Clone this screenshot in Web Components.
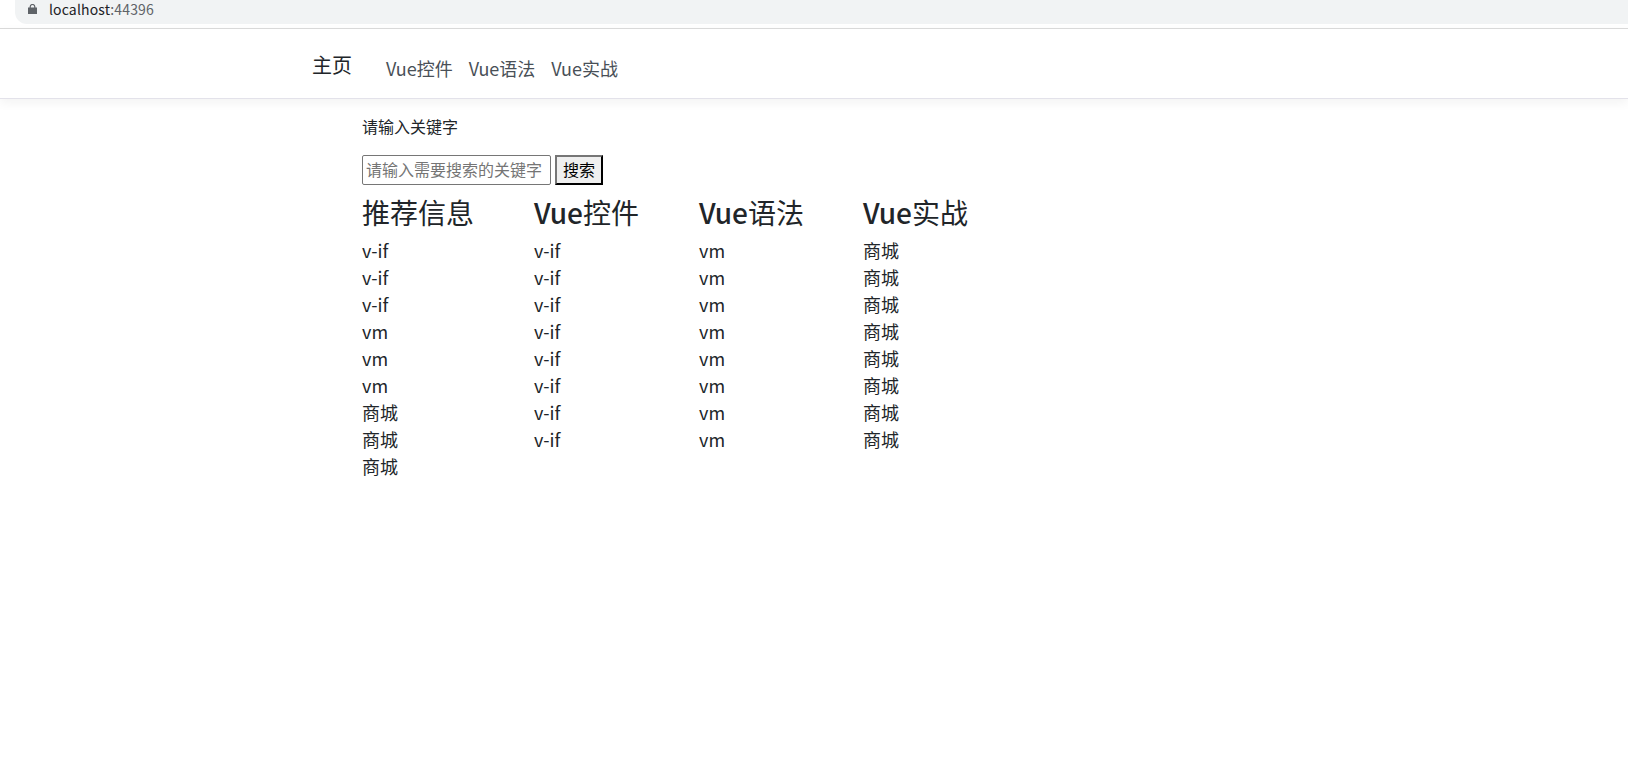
<!DOCTYPE html>
<html lang="zh-CN">
<head>
<meta charset="utf-8">
<title>localhost:44396</title>
<style>
html, body { margin: 0; background: #fff; }
body {
  font-family: "Noto Sans CJK SC", "Noto Sans", sans-serif;
  font-size: 18px;
  line-height: 27px;
  color: #212529;
}
</style>
</head>
<body>
<url-bar host="localhost" port=":44396"></url-bar>
<site-nav brand="主页">
  <a>Vue控件</a>
  <a>Vue语法</a>
  <a>Vue实战</a>
</site-nav>
<search-page>
  <link-column title="推荐信息" items="v-if,v-if,v-if,vm,vm,vm,商城,商城,商城"></link-column>
  <link-column latin="Vue" title="控件" items="v-if,v-if,v-if,v-if,v-if,v-if,v-if,v-if"></link-column>
  <link-column latin="Vue" title="语法" items="vm,vm,vm,vm,vm,vm,vm,vm"></link-column>
  <link-column latin="Vue" title="实战" items="商城,商城,商城,商城,商城,商城,商城,商城"></link-column>
</search-page>

<script>
class UrlBar extends HTMLElement {
  constructor() {
    super();
    this.attachShadow({ mode: "open" });
    this.shadowRoot.innerHTML = `<style>
:host { display: block; height: 28px; background: #fff; }
.bar {
  height: 24px;
  margin-left: 15px;
  padding-left: 13px;
  display: flex;
  align-items: center;
  gap: 12px;
  background: #f1f3f4;
  border-bottom-left-radius: 12px;
  font-size: 14px;
  letter-spacing: .14px;
  line-height: 18px;
  color: #202124;
}
.bar span span { color: #5f6368; }
.bar > span { position: relative; top: -3px; }
svg { position: relative; top: -3px; }
</style>
<div class="bar">
<svg width="9" height="10" viewBox="0 0 9 10"><path fill="#5f6368" d="M1.6 3.6V2.8a2.9 2.9 0 0 1 5.8 0v.8H9V10H0V3.6zM2.8 3.6h3.4v-.8a1.7 1.7 0 0 0-3.4 0z"/></svg>
<span>${this.getAttribute("host")}<span>${this.getAttribute("port")}</span></span>
</div>`;
  }
}
customElements.define("url-bar", UrlBar);

class SiteNav extends HTMLElement {
  constructor() {
    super();
    this.attachShadow({ mode: "open" });
    this.shadowRoot.innerHTML = `<style>
:host {
  display: flex;
  height: 69px;
  padding-left: 312px;
  border-top: 1px solid #d9d9d9;
  border-bottom: 1px solid #e3e2ea;
  box-shadow: 0 4px 10px rgba(0, 0, 0, .05);
  background: #fff;
  position: relative;
}
.brand { font-size: 20px; line-height: 30px; margin: 21px 34px 0 0; color: #212529; }
.links { display: flex; gap: 16px; margin-top: 26px; font-size: 18px; line-height: 27px; color: #495057; }
::slotted(a) { color: inherit; }
</style>
<div class="brand">${this.getAttribute("brand")}</div>
<div class="links"><slot></slot></div>`;
  }
}
customElements.define("site-nav", SiteNav);

class SearchPage extends HTMLElement {
  constructor() {
    super();
    this.attachShadow({ mode: "open" });
    this.shadowRoot.innerHTML = `<style>
:host { display: block; padding: 15px 0 0 362px; }
label { display: block; font-size: 16px; line-height: 24px; }
form { display: flex; gap: 4px; margin-top: 17px; height: 30px; }
input {
  width: 189px;
  height: 30px;
  box-sizing: border-box;
  padding: 0 3px 2px;
  border: 1px solid #767676;
  border-radius: 2px;
  font: 16px "Noto Sans CJK SC", sans-serif;
  outline: none;
}
input::placeholder { color: #757575; opacity: 1; }
button {
  width: 48px;
  height: 30px;
  padding: 0 0 2px;
  border: 2px outset #333;
  border-color: #767676 #111 #111 #767676;
  background: #efefef;
  color: #000;
  font: 16px "Noto Sans CJK SC", sans-serif;
}
.cols { display: grid; grid-template-columns: 172px 165px 164px auto; margin-top: 7px; }
</style>
<label>请输入关键字</label>
<form>
<input placeholder="请输入需要搜索的关键字"><button type="button">搜索</button>
</form>
<div class="cols"><slot></slot></div>`;
  }
}
customElements.define("search-page", SearchPage);

class LinkColumn extends HTMLElement {
  constructor() {
    super();
    this.attachShadow({ mode: "open" });
    let items = this.getAttribute("items").split(",");
    let latin = this.getAttribute("latin");
    this.shadowRoot.innerHTML = `<style>
:host { display: block; }
h2 { margin: 0 0 5px; font-size: 28px; line-height: 40px; font-weight: 400; }
h2 b { font-weight: 500; }
div { height: 27px; }
</style>
<h2>${latin ? `<b>${latin}</b>` : ""}${this.getAttribute("title")}</h2>
${items.map((item) => `<div>${item}</div>`).join("")}`;
  }
}
customElements.define("link-column", LinkColumn);
</script>
</body>
</html>
